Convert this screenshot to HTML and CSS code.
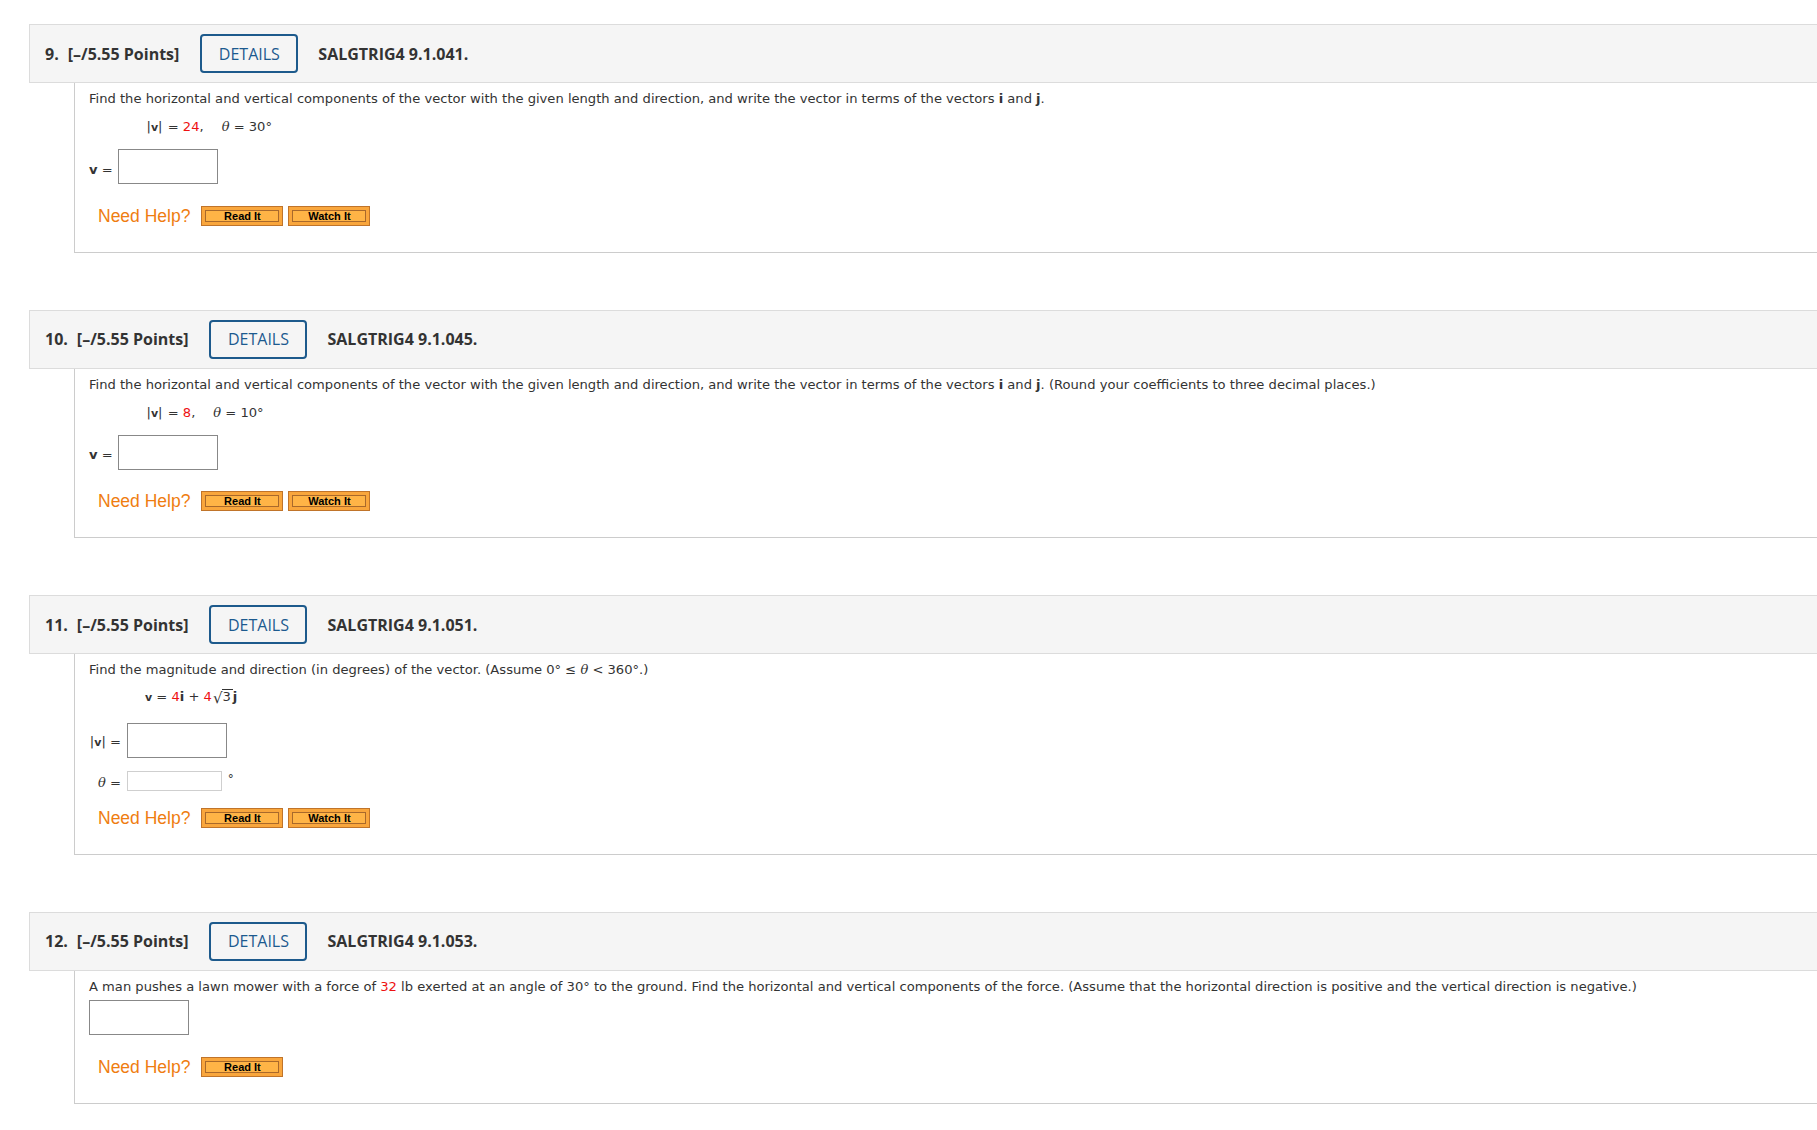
FILE: index.html
```html
<!DOCTYPE html>
<html lang="en">
<head>
<meta charset="utf-8">
<title>Questions</title>
<link rel="stylesheet" href="styles.css">
</head>
<body>
<div class="page">

  <div class="q">
    <div class="q-head">
      <span class="q-num">9.</span>
      <span class="q-pts">[–/5.55 Points]</span>
      <button class="details">DETAILS</button>
      <span class="q-code">SALGTRIG4 9.1.041.</span>
    </div>
    <div class="q-body">
      <p class="q-text">Find the horizontal and vertical components of the vector with the given length and direction, and write the vector in terms of the vectors <b>i</b> and <b>j</b>.</p>
      <div class="given"><span class="abs">|<b class="vb">v</b>|</span> = <span class="red">24</span>,<span class="sp"></span><i class="th">θ</i> = 30°</div>
      <div class="ans-row">
        <span class="lbl-v"><b>v</b> =</span>
        <span class="ans-box"></span>
      </div>
      <div class="help">
        <span class="help-label">Need Help?</span>
        <button class="hbtn"><span>Read It</span></button>
        <button class="hbtn"><span>Watch It</span></button>
      </div>
    </div>
  </div>

  <div class="q">
    <div class="q-head">
      <span class="q-num">10.</span>
      <span class="q-pts">[–/5.55 Points]</span>
      <button class="details">DETAILS</button>
      <span class="q-code">SALGTRIG4 9.1.045.</span>
    </div>
    <div class="q-body">
      <p class="q-text">Find the horizontal and vertical components of the vector with the given length and direction, and write the vector in terms of the vectors <b>i</b> and <b>j</b>. (Round your coefficients to three decimal places.)</p>
      <div class="given"><span class="abs">|<b class="vb">v</b>|</span> = <span class="red">8</span>,<span class="sp"></span><i class="th">θ</i> = 10°</div>
      <div class="ans-row">
        <span class="lbl-v"><b>v</b> =</span>
        <span class="ans-box"></span>
      </div>
      <div class="help">
        <span class="help-label">Need Help?</span>
        <button class="hbtn"><span>Read It</span></button>
        <button class="hbtn"><span>Watch It</span></button>
      </div>
    </div>
  </div>

  <div class="q">
    <div class="q-head">
      <span class="q-num">11.</span>
      <span class="q-pts">[–/5.55 Points]</span>
      <button class="details">DETAILS</button>
      <span class="q-code">SALGTRIG4 9.1.051.</span>
    </div>
    <div class="q-body">
      <p class="q-text">Find the magnitude and direction (in degrees) of the vector. (Assume 0° ≤ <i class="th">θ</i> &lt; 360°.)</p>
      <div class="given given-vec"><b class="vb">v</b> = <span class="red">4</span><b>i</b> + <span class="red">4</span><span class="sqrt"><span class="rad-sign">√</span><span class="radicand">3</span></span><b>j</b></div>
      <div class="ans-grid">
        <span class="lbl">|<b class="vb">v</b>| =</span>
        <span class="cell"><span class="ans-box"></span></span>
        <span class="lbl"><i class="th">θ</i> =</span>
        <span class="cell"><span class="ans-box ans-small"></span><span class="deg">°</span></span>
      </div>
      <div class="help help-q11">
        <span class="help-label">Need Help?</span>
        <button class="hbtn"><span>Read It</span></button>
        <button class="hbtn"><span>Watch It</span></button>
      </div>
    </div>
  </div>

  <div class="q">
    <div class="q-head">
      <span class="q-num">12.</span>
      <span class="q-pts">[–/5.55 Points]</span>
      <button class="details">DETAILS</button>
      <span class="q-code">SALGTRIG4 9.1.053.</span>
    </div>
    <div class="q-body">
      <p class="q-text">A man pushes a lawn mower with a force of <span class="red">32</span> lb exerted at an angle of 30° to the ground. Find the horizontal and vertical components of the force. (Assume that the horizontal direction is positive and the vertical direction is negative.)</p>
      <div class="ans-row ans-row-q12">
        <span class="ans-box"></span>
      </div>
      <div class="help help-q12">
        <span class="help-label">Need Help?</span>
        <button class="hbtn"><span>Read It</span></button>
      </div>
    </div>
  </div>

</div>
</body>
</html>
```

FILE: styles.css
```css
* { box-sizing: border-box; }

html, body {
  margin: 0;
  padding: 0;
  background: #ffffff;
}

body {
  font-family: "DejaVu Sans", Verdana, sans-serif;
  font-size: 13.1px;
  color: #333333;
  overflow-x: hidden;
}

.page {
  padding: 24px 0 0 29px;
}

.q {
  margin-bottom: 57px;
}

/* header bar */
.q-head {
  height: 59px;
  display: flex;
  align-items: center;
  background: #f5f5f5;
  border: 1px solid #dcdcdc;
  border-right: none;
  padding-left: 15px;
  font-family: "Open Sans", "Noto Sans", sans-serif;
  font-weight: 700;
  font-size: 16px;
  color: #333333;
  white-space: nowrap;
}

.q-num {
  margin-right: 9px;
}

.details {
  margin: 0 20px 0 21px;
  width: 98px;
  height: 39px;
  padding: 0;
  border: 2px solid #1d5a8c;
  border-radius: 4px;
  background: transparent;
  font-family: "Open Sans", "Noto Sans", sans-serif;
  font-weight: 400;
  font-size: 16px;
  color: #1c5a8f;
  cursor: pointer;
}

/* body box */
.q-body {
  margin-left: 45px;
  border-left: 1px solid #cccccc;
  border-bottom: 1px solid #cccccc;
  padding: 7px 0 26px 14px;
}

.q-text {
  margin: 0;
  line-height: 18px;
}

.red {
  color: #ee1111;
}

.given {
  margin-top: 10px;
  line-height: 18px;
  padding-left: 57.5px;
}

.given-vec {
  margin-top: 9px;
  padding-left: 56px;
}

.vb {
  font-size: 11px;
}

.abs {
  margin-right: 1px;
}

.sp {
  display: inline-block;
  width: 18px;
}

.th {
  font-family: "DejaVu Serif", "Liberation Serif", serif;
  font-style: italic;
  font-size: 13px;
}

.sqrt {
  display: inline-block;
  margin-left: 1px;
}

.rad-sign {
  display: inline-block;
  font-size: 15px;
  line-height: 16px;
  vertical-align: -2px;
  margin-right: -1px;
}

.radicand {
  display: inline-block;
  border-top: 1px solid #333333;
  line-height: 14px;
  padding: 0 2px 0 1px;
}

/* answer rows */
.ans-row {
  display: flex;
  align-items: center;
  margin-top: 12px;
}

.ans-row-q12 {
  margin-top: 4px;
}

.lbl-v {
  margin-right: 5px;
  padding-top: 6px;
  line-height: 18px;
}

.ans-box {
  display: inline-block;
  width: 100px;
  height: 35px;
  border: 1px solid #888888;
  background: #ffffff;
}

.ans-small {
  width: 95px;
  height: 20px;
  border-color: #cfcfcf;
}

.ans-grid {
  margin-top: 15.5px;
  display: grid;
  grid-template-columns: 32px auto;
  column-gap: 5.7px;
  row-gap: 12px;
  align-items: center;
  justify-content: start;
}

.lbl {
  text-align: right;
  line-height: 18px;
  padding-top: 4px;
  white-space: nowrap;
}

.cell {
  display: flex;
  align-items: center;
}

.deg {
  margin-left: 6px;
  margin-top: -4px;
  font-size: 12px;
}

/* help row */
.help {
  display: flex;
  align-items: center;
  margin-top: 21.5px;
  padding-left: 9px;
}

.help-q11 {
  margin-top: 16px;
}

.help-q12 {
  margin-top: 22px;
}

.help-label {
  font-family: "Liberation Sans", Arial, sans-serif;
  font-size: 17.5px;
  line-height: 20px;
  color: #ef7d10;
  margin-right: 11px;
}

.hbtn {
  width: 82px;
  height: 20px;
  margin: 0 5px 0 0;
  padding: 3px;
  border: 1px solid #c0742a;
  background: #f9a63c;
  cursor: pointer;
}

.hbtn span {
  display: block;
  height: 12px;
  border: 1px solid #a9692b;
  background: #ffb446;
  font-family: "Liberation Sans", Arial, sans-serif;
  font-weight: bold;
  font-size: 11px;
  line-height: 10px;
  color: #000000;
  text-align: center;
}
```
